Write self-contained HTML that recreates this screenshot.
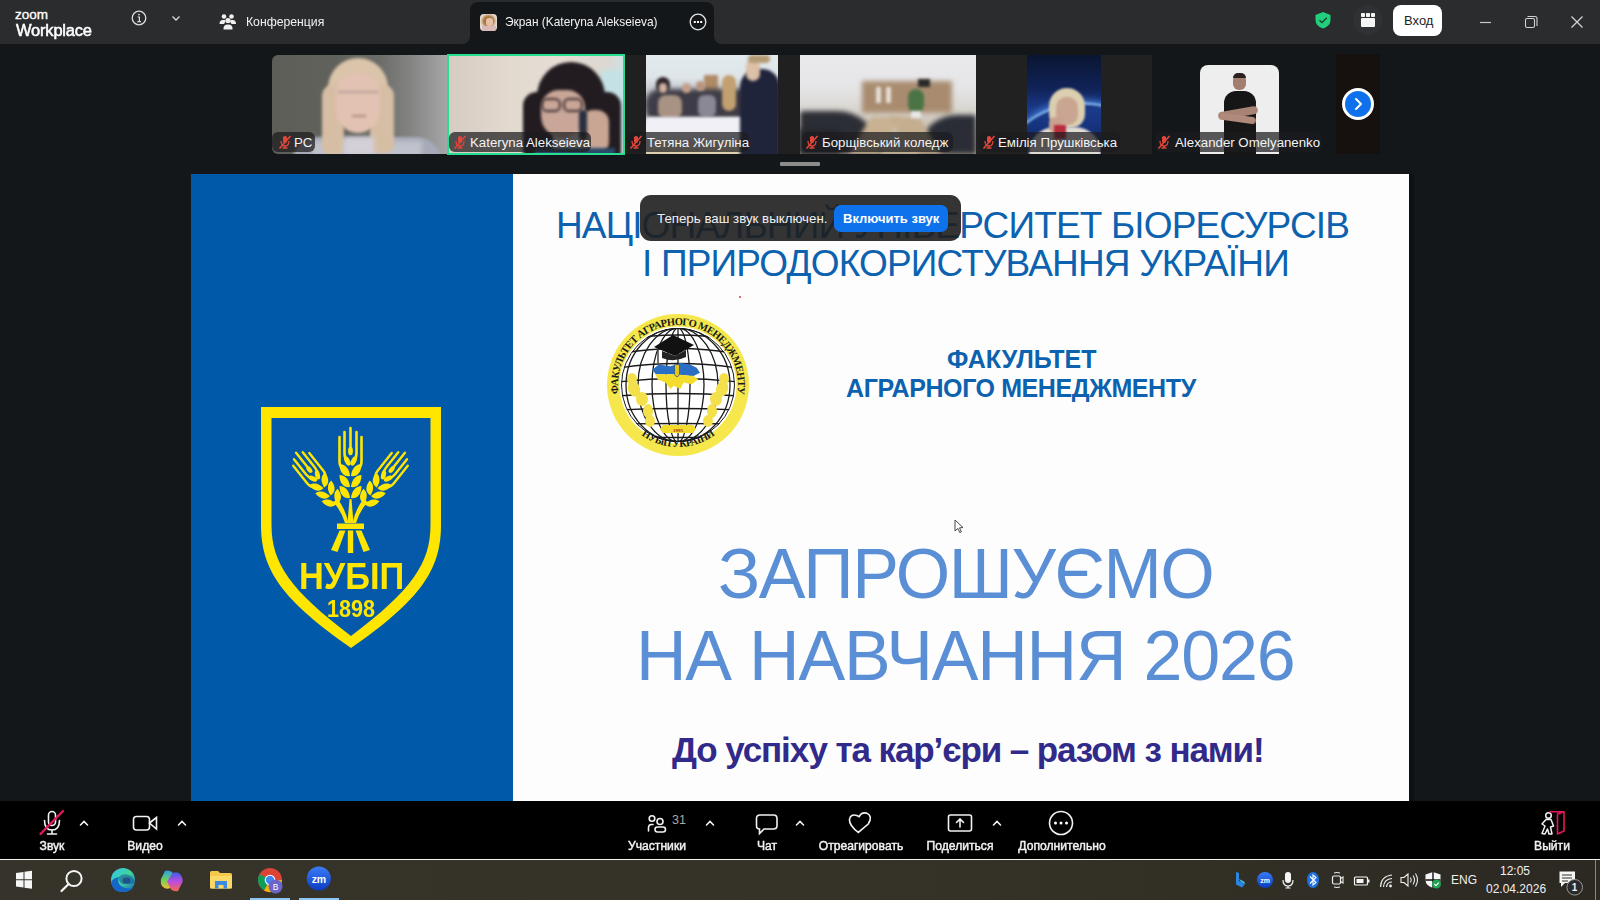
<!DOCTYPE html>
<html><head><meta charset="utf-8">
<style>
*{margin:0;padding:0;box-sizing:border-box}
html,body{width:1600px;height:900px;overflow:hidden;background:#13171a;font-family:"Liberation Sans",sans-serif;color:#fff}
.a{position:absolute}
.t{position:absolute;white-space:nowrap;line-height:1}
svg{position:absolute;overflow:visible}
.tb{text-align:center;font-size:12.5px;font-weight:normal;-webkit-text-stroke:0.45px #f2f2f2;color:#f2f2f2;line-height:1;white-space:nowrap;transform:scaleX(0.97)}
</style></head><body>

<!-- TITLE BAR -->
<div class="a" style="left:0;top:0;width:470px;height:44px;background:#2b2c2e;border-bottom-right-radius:8px"></div>
<div class="a" style="left:714px;top:0;width:886px;height:44px;background:#2b2c2e;border-bottom-left-radius:8px"></div>
<div class="a" style="left:460px;top:0;width:264px;height:10px;background:#2b2c2e"></div>
<div class="a" style="left:470px;top:2px;width:244px;height:42px;background:#13171a;border-radius:8px 8px 0 0"></div>

<div class="t" style="left:15px;top:8px;font-size:13.5px;-webkit-text-stroke:0.35px #fff;letter-spacing:0px">zoom</div>
<div class="t" style="left:16px;top:22px;font-size:17px;-webkit-text-stroke:0.55px #fff;letter-spacing:-0.2px;transform:scaleX(0.97);transform-origin:0 0">Workplace</div>


<svg class="a" style="left:0;top:0" width="1600" height="44" viewBox="0 0 1600 44">
  <circle cx="139" cy="18" r="6.8" stroke="#dcdcdc" stroke-width="1.3" fill="none"/>
  <circle cx="139" cy="14.6" r="0.9" fill="#dcdcdc"/>
  <path d="M137.6,17 H139.4 V21.6 M137.4,21.6 H141" stroke="#dcdcdc" stroke-width="1.2" fill="none"/>
  <path d="M172.5,16.5 L176,20 L179.5,16.5" stroke="#dcdcdc" stroke-width="1.3" fill="none"/>
  <g fill="#f0f0f0">
    <circle cx="224" cy="16.5" r="2.3"/><circle cx="231.5" cy="16.5" r="2.3"/>
    <path d="M219.5,24 Q219.5,20 223,20 L225,20 Q226,22 224,24 Z"/>
    <path d="M236,24 Q236,20 232.5,20 L230.5,20 Q229.5,22 231.5,24 Z"/>
    <circle cx="228" cy="20.5" r="2.6"/>
    <path d="M223.5,29.5 Q223,24.5 228,24.5 Q233,24.5 232.5,29.5 Z"/>
  </g>
  <circle cx="698" cy="22" r="7.8" stroke="#e6e6e6" stroke-width="1.3" fill="none"/>
  <rect x="693.8" y="21" width="2" height="2" fill="#fff"/><rect x="697" y="21" width="2" height="2" fill="#fff"/><rect x="700.2" y="21" width="2" height="2" fill="#fff"/>
  <path d="M1315.5,15 L1323,12 L1330.5,15 L1330.5,20 Q1330.5,26 1323,28.5 Q1315.5,26 1315.5,20 Z" fill="#21d07c"/>
  <path d="M1319.5,20.2 L1322,22.6 L1326.8,17.8" stroke="#1b3a2a" stroke-width="1.3" fill="none"/>
  <circle cx="1368" cy="20" r="15" fill="#303134"/>
  <rect x="1361" y="13" width="4" height="4" rx="0.8" fill="#f4f4f4"/><rect x="1366" y="13" width="4" height="4" rx="0.8" fill="#f4f4f4"/><rect x="1371" y="13" width="4" height="4" rx="0.8" fill="#f4f4f4"/>
  <rect x="1361" y="18" width="14" height="9" rx="1" fill="#f4f4f4"/>
  <rect x="1393" y="5" width="49" height="31" rx="8" fill="#fff"/>
  <path d="M1480,22.5 H1491" stroke="#c8c8c8" stroke-width="1.2"/>
  <rect x="1525.5" y="18.5" width="9" height="9" rx="1.5" stroke="#d0d0d0" stroke-width="1.1" fill="none"/>
  <path d="M1527.5,16.5 H1535 Q1537,16.5 1537,18.5 V26" stroke="#d0d0d0" stroke-width="1.1" fill="none"/>
  <path d="M1571.5,16.5 L1582.5,27.5 M1582.5,16.5 L1571.5,27.5" stroke="#d6d6d6" stroke-width="1.2"/>
</svg>
<div class="a" style="left:480px;top:14px;width:17px;height:17px;border-radius:4px;overflow:hidden;background:#e8dcd2">
  <div class="a" style="left:2px;top:1px;width:13px;height:12px;background:#a8763c;border-radius:6px;filter:blur(1px)"></div>
  <div class="a" style="left:6px;top:4px;width:7px;height:8px;background:#e6c0a6;border-radius:3px;filter:blur(0.6px)"></div>
  <div class="a" style="left:2px;top:12px;width:14px;height:6px;background:#d9b8b8;filter:blur(0.6px)"></div>
</div>
<div class="t" id="vhod" style="left:1404px;top:14px;font-size:13px;color:#222">Вход</div>

<div class="t" id="conf" style="left:246px;top:15px;font-size:13px;transform:scaleX(0.94);transform-origin:0 0;color:#f2f2f2">Конференция</div>
<div class="t" id="scr" style="left:505px;top:15px;font-size:13px;transform:scaleX(0.915);transform-origin:0 0;color:#f2f2f2">Экран (Kateryna Alekseieva)</div>

<!-- THUMB STRIP -->

<!-- PC -->
<div class="a" style="left:272px;top:55px;width:175px;height:99px;overflow:hidden;border-radius:6px 0 0 6px;background:linear-gradient(90deg,#5d5e58 0%,#61625c 40%,#6c6d69 62%,#858584 80%,#a6a6a8 100%)">
  <div class="a" style="left:20px;top:82px;width:150px;height:26px;background:#a6a9b8;border-radius:30px 30px 0 0;filter:blur(1.5px);"></div>
  <div class="a" style="left:40px;top:86px;width:110px;height:16px;background:#c0c2cc;filter:blur(2.5px);"></div>
  <div class="a" style="left:56px;top:3px;width:60px;height:52px;background:#dac4aa;border-radius:30px 30px 10px 10px;filter:blur(1.5px);"></div>
  <div class="a" style="left:50px;top:30px;width:22px;height:70px;background:#d6bea4;border-radius:10px 6px 8px 8px;filter:blur(1.5px);"></div>
  <div class="a" style="left:98px;top:30px;width:24px;height:68px;background:#d6bea4;border-radius:6px 10px 8px 8px;filter:blur(1.5px);"></div>
  <div class="a" style="left:64px;top:18px;width:44px;height:60px;background:#e2c2b2;border-radius:20px 20px 22px 22px;filter:blur(1.5px);"></div>
  <div class="a" style="left:66px;top:36px;width:40px;height:2px;background:#b8a098;filter:blur(1.5px);"></div>
  <div class="a" style="left:80px;top:60px;width:14px;height:2px;background:#b08a80;filter:blur(1.5px);"></div>
  <div class="a" style="left:72px;top:82px;width:30px;height:18px;background:#d4d0d8;filter:blur(2.5px);"></div>
</div>
<!-- KATERYNA -->
<div class="a" style="left:447px;top:54px;width:178px;height:101px;border:2px solid #26de90;overflow:hidden;background:linear-gradient(90deg,#d6ccc3 0%,#e2d9cf 35%,#e6ded5 65%,#dcd8d0 90%,#cfe0e2 100%)">
  <div class="a" style="left:152px;top:14px;width:26px;height:70px;background:#c4e2e6;filter:blur(2.5px);"></div>
  <div class="a" style="left:88px;top:6px;width:68px;height:50px;background:#221c21;border-radius:34px 34px 4px 4px;filter:blur(1.5px);"></div>
  <div class="a" style="left:74px;top:36px;width:30px;height:66px;background:#221c21;border-radius:14px 6px 6px 6px;filter:blur(1.5px);"></div>
  <div class="a" style="left:138px;top:36px;width:34px;height:66px;background:#221c21;border-radius:6px 14px 6px 6px;filter:blur(1.5px);"></div>
  <div class="a" style="left:92px;top:34px;width:44px;height:48px;background:#c9a697;border-radius:18px 18px 22px 22px;filter:blur(1.5px);"></div>
  <div class="a" style="left:92px;top:42px;width:20px;height:14px;border:2.5px solid #3a2c2e;border-radius:6px;filter:blur(1.5px);"></div>
  <div class="a" style="left:114px;top:42px;width:20px;height:14px;border:2.5px solid #3a2c2e;border-radius:6px;filter:blur(1.5px);"></div>
  <div class="a" style="left:132px;top:54px;width:28px;height:44px;background:#c9a594;border-radius:12px;filter:blur(1.5px);"></div>
  <div class="a" style="left:130px;top:54px;width:8px;height:30px;background:#2a3040;border-radius:3px;filter:blur(1.5px);"></div>
  <div class="a" style="left:86px;top:92px;width:80px;height:12px;background:#2a4a6a;filter:blur(1.5px);"></div>
</div>
<!-- TETYANA -->
<div class="a" style="left:626px;top:55px;width:174px;height:99px;background:#202020"></div>
<div class="a" style="left:646px;top:55px;width:132px;height:99px;overflow:hidden;background:linear-gradient(180deg,#e2eaee 0%,#dfe6ea 22%,#c8cbd2 35%,#9a98a0 50%,#e8e8ee 68%,#e6e4ea 82%,#dccfae 100%)">
  <div class="a" style="left:58px;top:20px;width:14px;height:18px;background:#b08a66;filter:blur(1.5px);"></div>
  <div class="a" style="left:0px;top:34px;width:120px;height:30px;background:#3e3c46;border-radius:14px 14px 6px 6px;filter:blur(2.5px);"></div>
  <div class="a" style="left:10px;top:22px;width:14px;height:16px;background:#2a2226;border-radius:7px;filter:blur(1.5px);"></div>
  <div class="a" style="left:13px;top:28px;width:8px;height:10px;background:#d0b0a0;border-radius:4px;filter:blur(1.5px);"></div>
  <div class="a" style="left:12px;top:40px;width:24px;height:24px;background:#a89284;border-radius:8px;filter:blur(1.5px);"></div>
  <div class="a" style="left:36px;top:28px;width:9px;height:10px;background:#c4a08c;border-radius:5px;filter:blur(1.5px);"></div>
  <div class="a" style="left:50px;top:26px;width:9px;height:10px;background:#b8947c;border-radius:5px;filter:blur(1.5px);"></div>
  <div class="a" style="left:52px;top:40px;width:18px;height:22px;background:#8a8894;border-radius:6px;filter:blur(1.5px);"></div>
  <div class="a" style="left:76px;top:20px;width:14px;height:36px;background:#c2a070;border-radius:7px;filter:blur(1.5px);"></div>
  <div class="a" style="left:0px;top:62px;width:108px;height:22px;background:#f0f0f6;border-radius:4px;filter:blur(1.5px);"></div>
  <div class="a" style="left:94px;top:14px;width:40px;height:90px;background:#20243a;border-radius:18px 18px 0 0;filter:blur(1.5px);"></div>
  <div class="a" style="left:100px;top:4px;width:14px;height:22px;background:#dcc0a8;border-radius:7px;filter:blur(1.5px);"></div>
  <div class="a" style="left:102px;top:0px;width:22px;height:8px;background:#b49a72;border-radius:7px;filter:blur(1.5px);"></div>
</div>
<!-- BORSHCHIV -->
<div class="a" style="left:800px;top:55px;width:176px;height:99px;overflow:hidden;background:linear-gradient(180deg,#e9e9eb 0%,#e6e6e8 30%,#dcdad6 50%,#c9c0b2 75%,#b9a98e 100%)">
  <div class="a" style="left:62px;top:26px;width:90px;height:32px;background:#a98c70;filter:blur(2.5px);"></div>
  <div class="a" style="left:76px;top:32px;width:5px;height:16px;background:#e6ded6;filter:blur(1.5px);"></div>
  <div class="a" style="left:86px;top:32px;width:5px;height:16px;background:#e6ded6;filter:blur(1.5px);"></div>
  <div class="a" style="left:118px;top:24px;width:12px;height:8px;background:#2a2a2a;filter:blur(1.5px);"></div>
  <div class="a" style="left:0;top:56px;width:80px;height:43px;background:#2c2e36;border-radius:4px 50px 0 0;filter:blur(2.5px);"></div>
  <div class="a" style="left:0;top:74px;width:40px;height:25px;background:#24262c;filter:blur(2.5px);"></div>
  <div class="a" style="left:118px;top:60px;width:58px;height:39px;background:#2a2d36;border-radius:50px 4px 0 0;filter:blur(2.5px);"></div>
  <div class="a" style="left:60px;top:62px;width:30px;height:37px;background:#c8b292;transform:skewX(-30deg);filter:blur(2.5px);"></div>
  <div class="a" style="left:100px;top:62px;width:30px;height:37px;background:#c4ae8e;transform:skewX(30deg);filter:blur(2.5px);"></div>
  <div class="a" style="left:108px;top:34px;width:16px;height:24px;background:#4a7446;border-radius:8px;filter:blur(1.5px);"></div>
  <div class="a" style="left:111px;top:56px;width:10px;height:7px;background:#e8e8e8;filter:blur(1.5px);"></div>
</div>
<!-- EMILIA -->
<div class="a" style="left:976px;top:55px;width:176px;height:99px;background:#212121"></div>
<div class="a" style="left:1027px;top:55px;width:74px;height:99px;overflow:hidden;background:linear-gradient(180deg,#0a1530 0%,#10245a 35%,#1a3a8a 55%,#163480 70%,#0c2050 100%)">
  <div class="a" style="left:-40px;top:48px;width:180px;height:120px;border-top:2px solid #9ad0ff;border-radius:90px 90px 0 0;transform:rotate(-10deg);box-shadow:0 -3px 6px rgba(90,160,255,0.6);filter:blur(1.2px);"></div>
  <div class="a" style="left:22px;top:33px;width:36px;height:40px;background:#dccfb0;border-radius:18px 18px 14px 14px;filter:blur(1.2px);"></div>
  <div class="a" style="left:29px;top:42px;width:22px;height:28px;background:#c9a592;border-radius:10px;filter:blur(1.2px);"></div>
  <div class="a" style="left:2px;top:72px;width:72px;height:30px;background:#e0dad4;border-radius:26px 26px 0 0;filter:blur(1.2px);"></div>
  <div class="a" style="left:22px;top:62px;width:14px;height:16px;background:#caa08e;border-radius:6px;filter:blur(1.2px);"></div>
  <div class="a" style="left:27px;top:70px;width:12px;height:14px;background:#b82c3c;filter:blur(1.2px);"></div>
</div>
<!-- ALEXANDER -->
<div class="a" style="left:1200px;top:65px;width:79px;height:89px;overflow:hidden;border-radius:8px 8px 0 0;background:#eeeeee">
  <div class="a" style="left:33px;top:9px;width:13px;height:16px;background:#a47e6e;border-radius:6px;filter:blur(0.5px)"></div>
  <div class="a" style="left:33px;top:8px;width:13px;height:5px;background:#2a2220;border-radius:6px 6px 0 0"></div>
  <div class="a" style="left:24px;top:26px;width:32px;height:70px;background:#161616;border-radius:12px 12px 0 0"></div>
  <div class="a" style="left:18px;top:44px;width:40px;height:8px;background:#a88272;border-radius:4px;transform:rotate(-10deg);filter:blur(0.5px)"></div>
  <div class="a" style="left:20px;top:50px;width:36px;height:7px;background:#b08a7a;border-radius:4px;transform:rotate(8deg);filter:blur(0.5px)"></div>
</div>
<!-- PARTIAL + ARROW -->
<div class="a" style="left:1336px;top:54px;width:44px;height:100px;background:#16110e"></div>
<div class="a" style="left:1342px;top:88px;width:32px;height:32px;border-radius:50%;background:#0e71eb;border:3px solid #fff"></div>
<svg class="a" style="left:1350px;top:96px" width="16" height="16" viewBox="0 0 16 16"><path d="M6,3 L11,8 L6,13" stroke="#fff" stroke-width="2" fill="none" stroke-linecap="round" stroke-linejoin="round"/></svg>
<!-- scroll indicator -->
<div class="a" style="left:780px;top:162px;width:40px;height:4px;background:#8c8c8c;border-radius:1px"></div>
<div class="a" style="left:272px;top:132px;width:43px;height:20px;background:rgba(28,28,30,0.72);border-radius:6px"></div><svg class="a" style="left:278px;top:135px" width="14" height="14" viewBox="0 0 14 14"><path d="M5,2 Q7,0 9,2 V7 Q7,9 5,7 Z" fill="#e0463c"/><path d="M3,6 Q3,11 7,11 Q11,11 11,6" stroke="#e0463c" stroke-width="1.3" fill="none"/><path d="M7,11 V13 M4.5,13 H9.5" stroke="#e0463c" stroke-width="1.3"/><path d="M1.5,13.5 L12.5,1" stroke="#e0463c" stroke-width="1.6"/></svg><div class="t nm" style="left:294px;top:136px;font-size:13.25px;color:#f4f4f4">PC</div><div class="a" style="left:449px;top:132px;width:142px;height:20px;background:rgba(28,28,30,0.72);border-radius:6px"></div><svg class="a" style="left:453px;top:135px" width="14" height="14" viewBox="0 0 14 14"><path d="M5,2 Q7,0 9,2 V7 Q7,9 5,7 Z" fill="#e0463c"/><path d="M3,6 Q3,11 7,11 Q11,11 11,6" stroke="#e0463c" stroke-width="1.3" fill="none"/><path d="M7,11 V13 M4.5,13 H9.5" stroke="#e0463c" stroke-width="1.3"/><path d="M1.5,13.5 L12.5,1" stroke="#e0463c" stroke-width="1.6"/></svg><div class="t nm" style="left:470px;top:136px;font-size:13.25px;color:#f4f4f4">Kateryna Alekseieva</div><div class="a" style="left:627px;top:132px;width:122px;height:20px;background:rgba(28,28,30,0.72);border-radius:6px"></div><svg class="a" style="left:629px;top:135px" width="14" height="14" viewBox="0 0 14 14"><path d="M5,2 Q7,0 9,2 V7 Q7,9 5,7 Z" fill="#e0463c"/><path d="M3,6 Q3,11 7,11 Q11,11 11,6" stroke="#e0463c" stroke-width="1.3" fill="none"/><path d="M7,11 V13 M4.5,13 H9.5" stroke="#e0463c" stroke-width="1.3"/><path d="M1.5,13.5 L12.5,1" stroke="#e0463c" stroke-width="1.6"/></svg><div class="t nm" style="left:647px;top:136px;font-size:13.25px;color:#f4f4f4">Тетяна Жигуліна</div><div class="a" style="left:802px;top:132px;width:151px;height:20px;background:rgba(28,28,30,0.72);border-radius:6px"></div><svg class="a" style="left:805px;top:135px" width="14" height="14" viewBox="0 0 14 14"><path d="M5,2 Q7,0 9,2 V7 Q7,9 5,7 Z" fill="#e0463c"/><path d="M3,6 Q3,11 7,11 Q11,11 11,6" stroke="#e0463c" stroke-width="1.3" fill="none"/><path d="M7,11 V13 M4.5,13 H9.5" stroke="#e0463c" stroke-width="1.3"/><path d="M1.5,13.5 L12.5,1" stroke="#e0463c" stroke-width="1.6"/></svg><div class="t nm" style="left:822px;top:136px;font-size:13.25px;color:#f4f4f4">Борщівський коледж</div><div class="a" style="left:979px;top:132px;width:141px;height:20px;background:rgba(28,28,30,0.72);border-radius:6px"></div><svg class="a" style="left:982px;top:135px" width="14" height="14" viewBox="0 0 14 14"><path d="M5,2 Q7,0 9,2 V7 Q7,9 5,7 Z" fill="#e0463c"/><path d="M3,6 Q3,11 7,11 Q11,11 11,6" stroke="#e0463c" stroke-width="1.3" fill="none"/><path d="M7,11 V13 M4.5,13 H9.5" stroke="#e0463c" stroke-width="1.3"/><path d="M1.5,13.5 L12.5,1" stroke="#e0463c" stroke-width="1.6"/></svg><div class="t nm" style="left:998px;top:136px;font-size:13.25px;color:#f4f4f4">Емілія Прушківська</div><div class="a" style="left:1155px;top:132px;width:166px;height:20px;background:rgba(28,28,30,0.72);border-radius:6px"></div><svg class="a" style="left:1157px;top:135px" width="14" height="14" viewBox="0 0 14 14"><path d="M5,2 Q7,0 9,2 V7 Q7,9 5,7 Z" fill="#e0463c"/><path d="M3,6 Q3,11 7,11 Q11,11 11,6" stroke="#e0463c" stroke-width="1.3" fill="none"/><path d="M7,11 V13 M4.5,13 H9.5" stroke="#e0463c" stroke-width="1.3"/><path d="M1.5,13.5 L12.5,1" stroke="#e0463c" stroke-width="1.6"/></svg><div class="t nm" style="left:1175px;top:136px;font-size:13.25px;color:#f4f4f4">Alexander Omelyanenko</div>

<!-- SLIDE -->
<div id="slide" class="a" style="left:191px;top:174px;width:1218px;height:627px;background:#fdfdfd;overflow:hidden">
  <div class="a" style="left:0;top:0;width:322px;height:627px;background:#0059a9"></div>
</div>
<div class="a" style="left:1409px;top:174px;width:5px;height:627px;background:#0e1113"></div>


<!-- SLIDE CONTENT -->
<svg class="a" style="left:0;top:0" width="1600" height="900" viewBox="0 0 1600 900">
  <path d="M261,407 H441 V525 C441,570 420,600 351,648 C282,600 261,570 261,525 Z" fill="#ffe600"/>
  <path d="M271.5,418 H430.5 V525 C430.5,563 412,590 351,636 C290,590 271.5,563 271.5,525 Z" fill="#0659a8"/>
  <defs>
    <g id="ear">
      <g stroke="#ffe600" stroke-width="2.6" fill="none" stroke-linecap="round">
        <path d="M0,-69 V-50"/>
        <path d="M-6,-65 V-44 Q-6,-39 -3.5,-36"/>
        <path d="M6,-65 V-44 Q6,-39 3.5,-36"/>
        <path d="M-11,-60 V-36 Q-11,-31 -8.5,-29"/>
        <path d="M11,-60 V-36 Q11,-31 8.5,-29"/>
      </g>
      <g fill="#ffe600">
        <ellipse cx="0" cy="-46" rx="2.4" ry="4.2"/>
        <ellipse cx="-3.2" cy="-36" rx="2.6" ry="5" transform="rotate(-25 -3.2 -36)"/>
        <ellipse cx="3.2" cy="-36" rx="2.6" ry="5" transform="rotate(25 3.2 -36)"/>
        <path d="M-0.5,-21 C-6,-20 -11,-24 -11,-33 C-5,-33 -1,-28 -0.5,-21 Z"/>
        <path d="M0.5,-21 C6,-20 11,-24 11,-33 C5,-33 1,-28 0.5,-21 Z"/>
        <path d="M-0.5,-10 C-6,-9 -11,-13 -11,-22 C-5,-22 -1,-17 -0.5,-10 Z"/>
        <path d="M0.5,-10 C6,-9 11,-13 11,-22 C5,-22 1,-17 0.5,-10 Z"/>
        <path d="M-0.5,1 C-6,2 -11,-2 -11,-11 C-5,-11 -1,-6 -0.5,1 Z"/>
        <path d="M0.5,1 C6,2 11,-2 11,-11 C5,-11 1,-6 0.5,1 Z"/>
      </g>
    </g>
  </defs>
  <use href="#ear" transform="translate(350.5,497)"/>
  <use href="#ear" transform="translate(336,503) rotate(-38.5) scale(0.93)"/>
  <use href="#ear" transform="translate(365,503) rotate(38.5) scale(0.93)"/>
  <g fill="#ffe600">
    <path d="M349.5,499 L351.5,499 L353.5,523 L347.5,523 Z"/>
    <path d="M333,502 Q341,510 345,523 L348.5,523 Q345,508 337.5,499 Z"/>
    <path d="M368,502 Q360,510 356,523 L352.5,523 Q356,508 363.5,499 Z"/>
    <rect x="337" y="523.5" width="27" height="5.5"/>
    <path d="M339.5,530.5 L345.5,530.5 L337.5,552 L331,550 Z"/>
    <path d="M347.8,530.5 L353.2,530.5 L353.2,553 L347.8,553 Z"/>
    <path d="M355.5,530.5 L361.5,530.5 L370,550 L363.5,552 Z"/>
  </g>
</svg>
<div class="t" id="nubip" style="left:299px;top:558px;transform:scaleX(0.93);transform-origin:0 0;font-size:37px;font-weight:bold;color:#ffe600">НУБІП</div>
<div class="t" id="y1898" style="left:327px;top:598px;transform:scaleX(0.94);transform-origin:0 0;font-size:23px;font-weight:bold;color:#ffe600">1898</div>

<div class="t" id="h1" style="left:556px;top:207px;font-size:37px;letter-spacing:-0.86px;color:#0c62ae">НАЦІОНАЛЬНИЙ УНІВЕРСИТЕТ БІОРЕСУРСІВ</div>
<div class="t" id="h2" style="left:642px;top:245px;font-size:37px;letter-spacing:-0.83px;color:#0c62ae">І ПРИРОДОКОРИСТУВАННЯ УКРАЇНИ</div>
<div class="a" style="left:739px;top:296px;width:2px;height:2px;background:#d04040;border-radius:1px"></div>


<svg class="a" style="left:596px;top:303px" width="164" height="164" viewBox="-82 -82 164 164">
  <defs>
    <clipPath id="gclip"><circle cx="0" cy="0" r="57"/></clipPath>
    <path id="arcTop" d="M-56.4,20.5 A60,60 0 1 1 56.4,20.5"/>
    <path id="arcBot" d="M-53.7,31 A62,62 0 0 0 53.7,31"/>
  </defs>
  <circle cx="0" cy="0" r="71" fill="#f6e84c"/>
  <circle cx="0" cy="0" r="58.5" fill="#ffffff"/>
  <g clip-path="url(#gclip)" stroke="#1a1a1a" stroke-width="1.3" fill="none">
    <ellipse cx="0" cy="0" rx="12" ry="57"/>
    <ellipse cx="0" cy="0" rx="26" ry="57"/>
    <ellipse cx="0" cy="0" rx="40" ry="57"/>
    <ellipse cx="0" cy="0" rx="52" ry="57"/>
    <line x1="0" y1="-57" x2="0" y2="57"/>
    <path d="M-60,-44 Q0,-56 60,-44"/>
    <path d="M-60,-31 Q0,-42 60,-31"/>
    <path d="M-60,-17 Q0,-26 60,-17"/>
    <path d="M-60,-3 Q0,-10 60,-3"/>
    <path d="M-60,11 Q0,6 60,11"/>
    <path d="M-60,25 Q0,22 60,25"/>
    <path d="M-60,39 Q0,38 60,39"/>
    <path d="M-60,52 Q0,53 60,52"/>
  </g>
  <circle cx="0" cy="0" r="56.5" stroke="#1a1a1a" stroke-width="1" fill="none"/>
  <!-- cap -->
  <path d="M-24,-38 L-5,-50 L16,-40 L-3,-29 Z" fill="#111"/>
  <path d="M-16,-34 L-16,-27 Q-4,-22 8,-28 L8,-35 L-3,-29 Z" fill="#222"/>
  <path d="M-20,-36 L-20,-22" stroke="#444" stroke-width="1.5"/>
  <!-- map -->
  <g transform="translate(-1,-9) scale(0.82)">
  <path d="M-30,-8 L-22,-14 L-8,-12 L4,-16 L16,-14 L24,-10 L28,-4 L20,0 L-4,-2 L-26,-2 Z" fill="#2a6fc4"/>
  <path d="M-26,-2 L-4,-2 L20,0 L26,4 L18,10 L8,8 L4,16 L-4,12 L-8,16 L-14,8 L-24,4 Z" fill="#f3dc2c"/>
  <path d="M-3,-14 L3,-14 L3,-2 Q0,4 -3,-2 Z" fill="#e8c41c" stroke="#1a4a90" stroke-width="0.8"/>
  </g>
  <!-- wheat -->
  <g fill="#f3e04a">
    <ellipse cx="-44" cy="4" rx="6" ry="8" transform="rotate(-20 -44 4)"/>
    <ellipse cx="-36" cy="14" rx="6" ry="7"/>
    <ellipse cx="-30" cy="26" rx="5" ry="7"/>
    <ellipse cx="-28" cy="36" rx="5" ry="6"/>
    <ellipse cx="-46" cy="-6" rx="5" ry="6"/>
    <ellipse cx="44" cy="4" rx="6" ry="8" transform="rotate(20 44 4)"/>
    <ellipse cx="38" cy="14" rx="6" ry="7"/>
    <ellipse cx="34" cy="26" rx="5" ry="7"/>
    <ellipse cx="30" cy="36" rx="5" ry="6"/>
    <ellipse cx="46" cy="-6" rx="5" ry="6"/>
  </g>
  <path d="M-15,40 L15,40 L18,44 L15,48 L-15,48 L-18,44 Z" fill="#f3dc2c"/>
  <text x="0" y="46.5" font-family="Liberation Serif" font-size="5" font-weight="bold" fill="#b02020" text-anchor="middle">1995</text>
  <text font-family="Liberation Serif" font-size="10.5" font-weight="bold" fill="#1a1a1a" letter-spacing="-0.6"><textPath href="#arcTop" startOffset="50%" text-anchor="middle">ФАКУЛЬТЕТ АГРАРНОГО МЕНЕДЖМЕНТУ</textPath></text>
  <text font-family="Liberation Serif" font-size="10.5" font-weight="bold" fill="#1a1a1a" letter-spacing="-0.5"><textPath href="#arcBot" startOffset="50%" text-anchor="middle">НУБіП УКРАЇНИ</textPath></text>
</svg>

<div class="t" id="f1" style="left:947px;top:347px;font-size:25px;letter-spacing:0px;font-weight:bold;color:#0c62ae">ФАКУЛЬТЕТ</div>
<div class="t" id="f2" style="left:846px;top:376px;font-size:25px;letter-spacing:-0.4px;font-weight:bold;color:#0c62ae">АГРАРНОГО МЕНЕДЖМЕНТУ</div>

<div class="t" id="z1" style="left:718px;top:538.5px;font-size:70px;letter-spacing:-1.45px;color:#5a8fd6">ЗАПРОШУЄМО</div>
<div class="t" id="z2" style="left:636px;top:621px;font-size:70px;letter-spacing:-1.2px;color:#5a8fd6">НА НАВЧАННЯ 2026</div>
<div class="t" id="d1" style="left:672px;top:732px;font-size:35px;letter-spacing:-1.1px;font-weight:bold;color:#312a8a">До успіху та кар’єри – разом з нами!</div>


<!-- TOAST -->
<div class="a" style="left:640px;top:195px;width:321px;height:46px;background:rgba(30,30,30,0.9);border-radius:11px"></div>
<div class="t" id="toastt" style="left:657px;top:212px;font-size:13.3px;color:#f0f0f0">Теперь ваш звук выключен.</div>
<div class="a" style="left:834px;top:205px;width:114px;height:27px;background:#0e72ed;border-radius:7px"></div>
<div class="t" id="toastb" style="left:843px;top:212px;font-size:13px;font-weight:bold;color:#fff">Включить звук</div>
<svg class="a" style="left:954px;top:519px" width="12" height="16" viewBox="0 0 12 16"><path d="M1,1 L1,12 L3.8,9.4 L5.8,13.6 L7.4,12.9 L5.5,8.8 L9,8.6 Z" fill="#fff" stroke="#333" stroke-width="0.9" stroke-linejoin="round"/></svg>

<!-- TOOLBAR -->
<div class="a" style="left:0;top:801px;width:1600px;height:58px;background:#000"></div>


<svg class="a" style="left:0;top:801px" width="1600" height="58" viewBox="0 801 1600 58">
  <g stroke="#f2f2f2" stroke-width="1.6" fill="none" stroke-linecap="round">
    <rect x="48.5" y="811.5" width="7" height="14" rx="3.5"/>
    <path d="M44.5,820.5 Q44.5,830 52,830 Q59.5,830 59.5,820.5"/>
    <path d="M52,830 V834 M47.5,834 H56.5"/>
    <path d="M80.5,825 L84,821.5 L87.5,825"/>
    <rect x="133.5" y="816.5" width="16" height="13.5" rx="3"/>
    <path d="M149.5,823 L156.5,817.5 V829 Z"/>
    <path d="M178.5,825 L182,821.5 L185.5,825"/>
    <circle cx="652" cy="818.5" r="2.8"/>
    <path d="M648.5,831 V828 Q648.5,824.5 651.5,824.5 H653"/>
    <circle cx="660" cy="821.5" r="3"/>
    <rect x="655" y="827" width="10.5" height="5" rx="2.5"/>
    <path d="M706.5,825 L710,821.5 L713.5,825"/>
    <path d="M760,815 H773.5 Q777,815 777,818.5 V825.5 Q777,829 773.5,829 H764 L759.5,833.5 V829 Q756.5,829 756.5,825.5 V818.5 Q756.5,815 760,815 Z"/>
    <path d="M796.5,825 L800,821.5 L803.5,825"/>
    <path d="M857,832 Q849,824 850,818 Q852,812 858,815 L860,816.5 Q863,812 868,814 Q874,818 868,825 Z" transform="rotate(-8 861 823)"/>
    <rect x="948.5" y="815" width="23" height="16" rx="2"/>
    <path d="M960,827 V819 M956.5,822.5 L960,819 L963.5,822.5"/>
    <path d="M993.5,825 L997,821.5 L1000.5,825"/>
    <circle cx="1061" cy="823" r="11.5"/>
  </g>
  <path d="M40.5,834 L63,811" stroke="#e5175c" stroke-width="2.4" stroke-linecap="round"/>
  <g fill="#fff"><circle cx="1055.5" cy="823" r="1.5"/><circle cx="1061" cy="823" r="1.5"/><circle cx="1066.5" cy="823" r="1.5"/></g>
  <g stroke="#f2f2f2" stroke-width="1.5" fill="none" stroke-linejoin="round" stroke-linecap="round">
    <circle cx="1548.5" cy="815.5" r="2.8"/>
    <path d="M1546,819.5 L1551,819.5 L1553.5,826 L1550.5,827 L1552,834 L1549,834 L1547.5,829 L1545,834 L1542,833.5 L1545,826 L1542,824 Z"/>
  </g>
  <path d="M1549.5,811.8 H1564 V831 L1557.5,834 V814 L1564,811.8" stroke="#e5175c" stroke-width="1.6" fill="none" stroke-linejoin="round"/>
</svg>
<div class="t" id="p31" style="left:672px;top:814px;font-size:12.5px;color:#a8a8a8">31</div>
<div class="a tb" style="left:2px;top:840px;width:100px">Звук</div>
<div class="a tb" style="left:95px;top:840px;width:100px">Видео</div>
<div class="a tb" style="left:597px;top:840px;width:120px">Участники</div>
<div class="a tb" style="left:716.5px;top:840px;width:100px">Чат</div>
<div class="a tb" style="left:796px;top:840px;width:130px">Отреагировать</div>
<div class="a tb" style="left:895px;top:840px;width:130px">Поделиться</div>
<div class="a tb" style="left:996.5px;top:840px;width:130px">Дополнительно</div>
<div class="a tb" style="left:1502px;top:840px;width:100px">Выйти</div>

<!-- TASKBAR -->
<div class="a" style="left:0;top:859px;width:1600px;height:1px;background:#f4f4f0"></div>
<div class="a" style="left:0;top:860px;width:1600px;height:40px;background:linear-gradient(90deg,#36342a 0%,#353327 55%,#323025 75%,#2e2b24 90%,#2c2923 100%)"></div>


<svg class="a" style="left:0;top:860px" width="1600" height="40" viewBox="0 860 1600 40">
  <defs>
    <linearGradient id="edg" x1="0" y1="0" x2="1" y2="1"><stop offset="0" stop-color="#35c1f1"/><stop offset="0.5" stop-color="#3fd69a"/><stop offset="1" stop-color="#1b60c0"/></linearGradient>
    <linearGradient id="cop" x1="0" y1="0" x2="1" y2="1"><stop offset="0" stop-color="#2aa8f0"/><stop offset="0.35" stop-color="#f2d43a"/><stop offset="0.6" stop-color="#f05a5a"/><stop offset="1" stop-color="#c040e0"/></linearGradient>
    <linearGradient id="zmg" x1="0" y1="0" x2="0" y2="1"><stop offset="0" stop-color="#3a7bf8"/><stop offset="1" stop-color="#0b3cc0"/></linearGradient>
  </defs>
  <!-- windows -->
  <path d="M16,873 L23.5,872 V879.3 H16 Z M24.5,871.8 L32,870.8 V879.3 H24.5 Z M16,880.3 H23.5 V887.6 L16,886.6 Z M24.5,880.3 H32 V888.8 L24.5,887.8 Z" fill="#f6f6f6"/>
  <!-- search -->
  <circle cx="74" cy="878.5" r="7.6" stroke="#f6f6f6" stroke-width="2" fill="none"/>
  <path d="M68.6,884 L61.5,891" stroke="#f6f6f6" stroke-width="2.2" stroke-linecap="round"/>
  <!-- edge -->
  <circle cx="123" cy="880" r="12" fill="url(#edg)"/>
  <path d="M111.2,882 Q112,892.5 124,892 Q130,891.5 133.5,887.5 Q126,890 121,886 Q116.5,882 119,877 Q113,878 111.2,882 Z" fill="#1466c8"/>
  <path d="M119,877 Q122,873.5 127,874.5 Q132.5,876 134.5,880.5 Q135,884 130,884 L123,884 Q118.5,883 119,877 Z" fill="#1a4f9a" opacity="0.55"/>
  <ellipse cx="126.5" cy="880.5" rx="4" ry="3" fill="#1a3f80" opacity="0.7"/>
  <!-- copilot -->
  <defs>
    <linearGradient id="copL" x1="0" y1="0" x2="0" y2="1"><stop offset="0" stop-color="#2c9cf4"/><stop offset="0.5" stop-color="#6ad05a"/><stop offset="1" stop-color="#f6c02c"/></linearGradient>
    <linearGradient id="copR" x1="0" y1="0" x2="0" y2="1"><stop offset="0" stop-color="#3860e8"/><stop offset="0.5" stop-color="#c04ce0"/><stop offset="1" stop-color="#f46a48"/></linearGradient>
  </defs>
  <path d="M165,871 Q169,869.5 172,872 L176,880 L170.5,888 Q166,890 163,887 Q160,884 161,879 Z" fill="url(#copL)"/>
  <path d="M178,891 Q174,892 171,889.5 L167,881.5 L172.5,873 Q177,871 180,874 Q183,877 182.5,882 Z" fill="url(#copR)"/>
  <!-- folder -->
  <path d="M210,872.5 Q210,871 211.5,871 H218 L220,873 H230.5 Q232,873 232,874.5 V887 Q232,888.5 230.5,888.5 H211.5 Q210,888.5 210,887 Z" fill="#f3c94c"/>
  <path d="M210,876 H232 V887 Q232,888.5 230.5,888.5 H211.5 Q210,888.5 210,887 Z" fill="#fbd968"/>
  <path d="M215,881 H227 V888.5 H223.5 V885 H218.5 V888.5 H215 Z" fill="#3c8be0"/>
  <!-- chrome -->
  <circle cx="270" cy="880" r="12" fill="#db4437"/>
  <path d="M270,880 L259.6,874 A12,12 0 0 0 264,890.4 Z" fill="#0f9d58"/>
  <path d="M270,880 L282,880 A12,12 0 0 1 264,890.4 Z" fill="#f4b400"/>
  <circle cx="270" cy="880" r="5.3" fill="#fff"/><circle cx="270" cy="880" r="4.2" fill="#4285f4"/>
  <circle cx="275.5" cy="886.5" r="7" fill="#6c64c8"/>
  <text x="275.5" y="890" font-family="Liberation Sans" font-size="8.5" fill="#fff" text-anchor="middle">B</text>
  <!-- zoom -->
  <circle cx="318.8" cy="878.6" r="12" fill="url(#zmg)"/>
  <text x="318.8" y="882.5" font-family="Liberation Sans" font-weight="bold" font-size="10.5" fill="#fff" text-anchor="middle" letter-spacing="-0.3">zm</text>
  <rect x="250" y="898" width="40" height="2" fill="#8cc6f2"/>
  <rect x="299" y="898" width="40" height="2" fill="#8cc6f2"/>
  <!-- tray -->
  <path d="M1236,872 L1239,873 V881 L1245,884 L1242,887.5 L1236,884.5 Z" fill="#2b86e0"/>
  <path d="M1239,879 L1244,881.5 L1245.5,884 L1241,882 Z" fill="#3cc2f0"/>
  <circle cx="1265" cy="880" r="8" fill="url(#zmg)"/>
  <text x="1265" y="882.8" font-family="Liberation Sans" font-weight="bold" font-size="7" fill="#fff" text-anchor="middle" letter-spacing="-0.2">zm</text>
  <rect x="1285" y="872" width="6" height="11" rx="3" fill="#f6f6f6"/>
  <path d="M1283,880 Q1283,886 1288,886 Q1293,886 1293,880 M1288,886 V888 M1285.5,888 H1290.5" stroke="#f6f6f6" stroke-width="1.2" fill="none"/>
  <ellipse cx="1313" cy="880" rx="6" ry="8" fill="#1d72e0"/>
  <path d="M1310,876.5 L1316,882.5 L1313,885 V875 L1316,877.5 L1310,883.5" stroke="#fff" stroke-width="1.1" fill="none"/>
  <rect x="1332.5" y="876" width="8" height="8" rx="1.5" stroke="#f0f0f0" stroke-width="1.2" fill="none"/>
  <path d="M1340.5,878.5 L1343,877 V883 L1340.5,881.5" stroke="#f0f0f0" stroke-width="1.1" fill="none"/>
  <path d="M1334,873 Q1337,872 1340,873 M1334,887 Q1337,888 1340,887" stroke="#f0f0f0" stroke-width="1" fill="none"/>
  <rect x="1354.5" y="877" width="13" height="8" rx="1" stroke="#f6f6f6" stroke-width="1.2" fill="none"/>
  <rect x="1356.5" y="879" width="7" height="4" fill="#f6f6f6"/><rect x="1368" y="879.5" width="1.5" height="3" fill="#f6f6f6"/>
  <g stroke="#f0f0f0" stroke-width="1.2" fill="none">
    <path d="M1380.5,887 Q1381,876 1392,875"/><path d="M1383.5,887 Q1384,879 1392,878.5"/><path d="M1386.5,887 Q1387,882 1392,882"/>
  </g>
  <circle cx="1390.5" cy="886" r="1.4" fill="#f0f0f0"/>
  <path d="M1401,877.5 H1404 L1408,874 V886 L1404,882.5 H1401 Z" stroke="#f0f0f0" stroke-width="1.1" fill="none"/>
  <g stroke="#f0f0f0" stroke-width="1.1" fill="none"><path d="M1410.5,877.5 Q1412,880 1410.5,882.5"/><path d="M1413,875.5 Q1416,880 1413,884.5"/><path d="M1415.5,873.5 Q1419.5,880 1415.5,886.5"/></g>
  <path d="M1425.5,874.5 L1433,872 L1440.5,874.5 V880 Q1440.5,885.5 1433,888 Q1425.5,885.5 1425.5,880 Z" fill="#f6f6f6"/>
  <path d="M1433,872 V888 M1425.5,880 H1440.5" stroke="#111" stroke-width="1.4"/>
  <path d="M1433,872 L1440.5,874.5 V880 H1433 Z M1425.5,880 H1433 V888 Q1425.5,885.5 1425.5,880 Z" fill="#111" opacity="0"/>
  <circle cx="1436.5" cy="884" r="4.5" fill="#1ea453"/>
  <path d="M1434.3,884 L1436,885.6 L1438.8,882.6" stroke="#fff" stroke-width="1.1" fill="none"/>
  <path d="M1559.5,871.5 H1575 V883 H1565 L1561,887 V883 H1559.5 Z" fill="#f6f6f6"/>
  <path d="M1562,875 H1572 M1562,878 H1572 M1562,881 H1568" stroke="#343128" stroke-width="1"/>
  <circle cx="1574.7" cy="887.3" r="7.8" fill="#2a2a2a" stroke="#9a9a9a" stroke-width="1"/>
  <text x="1574.5" y="891" font-family="Liberation Sans" font-weight="bold" font-size="10" fill="#f0f0f0" text-anchor="middle">1</text>
  <rect x="1595" y="860" width="1" height="40" fill="#8a8880"/>
</svg>
<div class="t" id="eng" style="left:1451px;top:874px;font-size:12px;color:#f0f0f0">ENG</div>
<div class="t" id="tm" style="left:1500px;top:865px;font-size:12px;color:#f0f0f0">12:05</div>
<div class="t" id="dt" style="left:1486px;top:883px;font-size:12px;color:#f0f0f0">02.04.2026</div>

</body></html>
